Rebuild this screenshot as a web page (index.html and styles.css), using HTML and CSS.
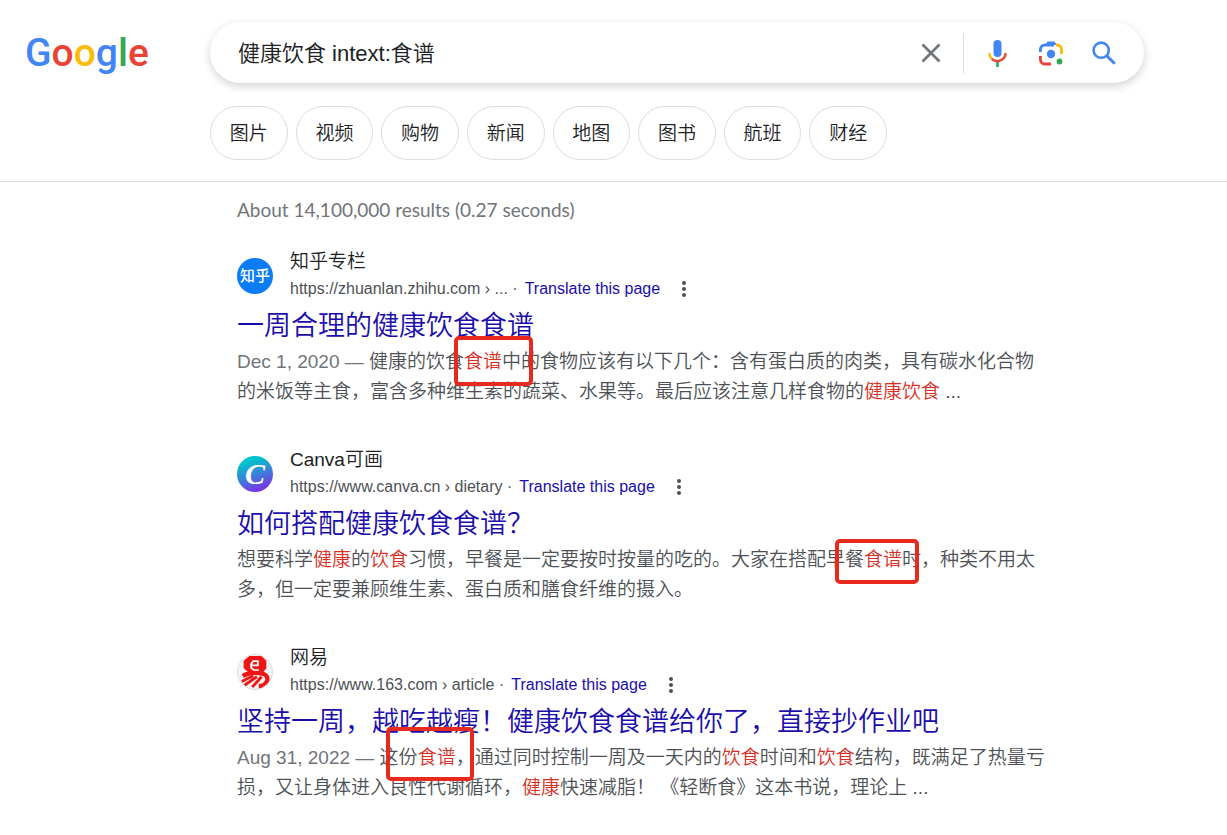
FILE: index.html
```html
<!DOCTYPE html>
<html lang="zh-CN">
<head>
  <meta charset="UTF-8">
  <title>健康饮食 intext:食谱 - Google</title>
  <link rel="stylesheet" href="styles.css">
</head>
<body>

<header class="header">
  <a class="logo" href="#" aria-label="Google"><span class="blue">G</span><span class="red">o</span><span class="yellow">o</span><span class="blue">g</span><span class="green">l</span><span class="red">e</span></a>

  <div class="search">
    <form class="search-bar" role="search">
      <input class="search-input" type="text" aria-label="Search" value="健康饮食 intext:食谱">
      <button class="icon-btn clear-btn" type="button" aria-label="Clear">
        <svg width="20" height="20" viewBox="0 0 20 20"><path d="M1.5 1.5l17 17M18.5 1.5l-17 17" fill="none" stroke="#70757a" stroke-width="2.6"/></svg>
      </button>
      <span class="divider"></span>
      <button class="icon-btn" type="button" aria-label="Search by voice">
        <svg width="20" height="28" viewBox="0 0 20 28">
          <rect x="5.500" y="1" width="8" height="17" rx="4" fill="#4285f4"/>
          <path d="M9.500 22v6" stroke="#34a853" stroke-width="2.6"/>
          <path d="M1.400 14a8.200 8.200 0 0 0 2.400 5.800" fill="none" stroke="#fbbc04" stroke-width="2.4"/>
          <path d="M3.800 19.800A8.200 8.200 0 0 0 17.600 14" fill="none" stroke="#ea4335" stroke-width="2.4"/>
        </svg>
      </button>
      <button class="icon-btn" type="button" aria-label="Search by image">
        <svg width="26" height="26" viewBox="0 0 26 26">
          <path d="M2.4 12V9.5A4.500 4.500 0 0 1 6.900 5H16" fill="none" stroke="#4285f4" stroke-width="2.8"/>
          <path d="M7.5 5l2-3.500h7L18.500 5z" fill="#4285f4"/>
          <path d="M18 5h1a4.500 4.500 0 0 1 4.500 4.500V14" fill="none" stroke="#fbbc04" stroke-width="2.8"/>
          <path d="M2.4 16v3.500A4.500 4.500 0 0 0 6.900 24H13" fill="none" stroke="#ea4335" stroke-width="2.8"/>
          <circle cx="13" cy="14" r="4.2" fill="#4285f4"/>
          <circle cx="21.5" cy="21.5" r="2.9" fill="#34a853"/>
        </svg>
      </button>
      <button class="icon-btn" type="submit" aria-label="Google Search">
        <svg width="24" height="24" viewBox="0 0 24 24">
          <circle cx="9.2" cy="9.2" r="7.6" fill="none" stroke="#4285f4" stroke-width="2.6"/>
          <path d="M14.5 14.5l8.300 8.300" stroke="#4285f4" stroke-width="3"/>
        </svg>
      </button>
    </form>

    <nav class="chips">
      <a class="chip" href="#">图片</a>
      <a class="chip" href="#">视频</a>
      <a class="chip" href="#">购物</a>
      <a class="chip" href="#">新闻</a>
      <a class="chip" href="#">地图</a>
      <a class="chip" href="#">图书</a>
      <a class="chip" href="#">航班</a>
      <a class="chip" href="#">财经</a>
    </nav>
  </div>
</header>

<main class="results">
  <p class="stats">About 14,100,000 results (0.27 seconds)</p>

  <article class="result">
    <div class="site">
      <span class="favicon favicon-zhihu">知乎</span>
      <div>
        <div class="site-name">知乎专栏</div>
        <div class="site-url">https://zhuanlan.zhihu.com › ... · <a href="#">Translate this page</a>
          <button class="more" type="button" aria-label="More"><svg width="6" height="18" viewBox="0 0 6 18" fill="#4d5156"><circle cx="3" cy="3" r="2"/><circle cx="3" cy="9" r="2"/><circle cx="3" cy="15" r="2"/></svg></button>
        </div>
      </div>
    </div>
    <h3 class="title"><a href="#">一周合理的健康饮食食谱</a></h3>
    <p class="desc"><span class="date">Dec 1, 2020 — </span>健康的饮食<em>食谱</em>中的食物应该有以下几个：含有蛋白质的肉类，具有碳水化合物的米饭等主食，富含多种维生素的蔬菜、水果等。最后应该注意几样食物的<em>健康饮食</em> ...</p>
    <span class="box box-1"></span>
  </article>

  <article class="result">
    <div class="site">
      <span class="favicon favicon-canva">C</span>
      <div>
        <div class="site-name">Canva可画</div>
        <div class="site-url">https://www.canva.cn › dietary · <a href="#">Translate this page</a>
          <button class="more" type="button" aria-label="More"><svg width="6" height="18" viewBox="0 0 6 18" fill="#4d5156"><circle cx="3" cy="3" r="2"/><circle cx="3" cy="9" r="2"/><circle cx="3" cy="15" r="2"/></svg></button>
        </div>
      </div>
    </div>
    <h3 class="title"><a href="#">如何搭配健康饮食食谱？</a></h3>
    <p class="desc">想要科学<em>健康</em>的<em>饮食</em>习惯，早餐是一定要按时按量的吃的。大家在搭配早餐<em>食谱</em>时，种类不用太多，但一定要兼顾维生素、蛋白质和膳食纤维的摄入。</p>
    <span class="box box-2"></span>
  </article>

  <article class="result">
    <div class="site">
      <span class="favicon favicon-163">
        <svg width="36" height="36" viewBox="0 0 36 36">
          <path d="M12 1h13l5 5v8l-4 5H12l-6-5V6z" fill="#f01414"/>
          <path d="M15 11h6V6.500h-5l-2 3v4l3 2.500h5" fill="none" stroke="#fff" stroke-width="2"/>
          <path d="M5 22q9-5 22-2q5 2 4 7q-2 6-9 6" fill="none" stroke="#f01414" stroke-width="4.500"/>
          <path d="M4 28l12-6M7 32l13-9M15 34l10-11" fill="none" stroke="#f01414" stroke-width="3"/>
        </svg>
      </span>
      <div>
        <div class="site-name">网易</div>
        <div class="site-url">https://www.163.com › article · <a href="#">Translate this page</a>
          <button class="more" type="button" aria-label="More"><svg width="6" height="18" viewBox="0 0 6 18" fill="#4d5156"><circle cx="3" cy="3" r="2"/><circle cx="3" cy="9" r="2"/><circle cx="3" cy="15" r="2"/></svg></button>
        </div>
      </div>
    </div>
    <h3 class="title"><a href="#">坚持一周，越吃越瘦！健康饮食食谱给你了，直接抄作业吧</a></h3>
    <p class="desc"><span class="date">Aug 31, 2022 — </span>这份<em>食谱</em>，通过同时控制一周及一天内的<em>饮食</em>时间和<em>饮食</em>结构，既满足了热量亏损，又让身体进入良性代谢循环，<em>健康</em>快速减脂！ 《轻断食》这本书说，理论上 ...</p>
    <span class="box box-3"></span>
  </article>
</main>

</body>
</html>
```
FILE: styles.css
```css
* {
  box-sizing: border-box;
}
body {
  margin: 0;
  background: #fff;
  color: #202124;
  font-family: "Liberation Sans", "Noto Sans CJK SC", sans-serif;
  font-weight: 350;
  text-spacing-trim: space-all;
}
a {
  color: #1a0dab;
  text-decoration: none;
}

/* header */
.header {
  display: flex;
  padding: 22px 83px 21px 0;
  border-bottom: 1px solid #dadce0;
}
.logo {
  width: 210px;
  padding-left: 25px;
  font: 500 39px/63px Roboto, sans-serif;
}
.blue { color: #4285f4; }
.red { color: #ea4335; }
.yellow { color: #fbbc05; }
.green { color: #34a853; }

.search {
  flex: 1;
}
.search-bar {
  display: flex;
  align-items: center;
  height: 61px;
  padding: 0 14px 0 28px;
  border-radius: 31px;
  box-shadow: 0 3px 8px rgba(60, 64, 67, 0.24);
}
.search-input {
  flex: 1;
  min-width: 0;
  height: 40px;
  padding: 0 0 4px;
  border: none;
  outline: none;
  background: none;
  color: #202124;
  font: inherit;
  font-size: 22px;
}
.icon-btn {
  display: flex;
  align-items: center;
  justify-content: center;
  width: 53px;
  height: 53px;
  padding: 0;
  border: none;
  background: none;
  cursor: pointer;
}
.clear-btn {
  width: 32px;
}
.divider {
  width: 1px;
  height: 40px;
  margin: 0 7px 0 16px;
  background: #dadce0;
}

.chips {
  display: flex;
  gap: 8px;
  max-width: 677px;
  margin-top: 23px;
}
.chip {
  flex: 1;
  padding-top: 2px;
  border: 1px solid #dadce0;
  border-radius: 27px;
  color: #202124;
  font-size: 19px;
  line-height: 50px;
  text-align: center;
}

/* results */
.results {
  max-width: 1049px;
  padding: 13px 0 0 237px;
}
.stats {
  margin: 0 0 24px;
  color: #70757a;
  font: 400 19px/30px Lato, sans-serif;
}
.result {
  position: relative;
  margin-bottom: 40px;
}
.site {
  display: flex;
  align-items: center;
  gap: 17px;
}
.site-name {
  font-size: 19px;
  line-height: 26px;
}
.site-url {
  display: flex;
  align-items: center;
  color: #4d5156;
  font-size: 16px;
  line-height: 28px;
}
.site-url a {
  margin-left: 7px;
}
.more {
  display: flex;
  margin-left: 21px;
  padding: 0;
  border: none;
  background: none;
  cursor: pointer;
}
.favicon {
  width: 36px;
  height: 36px;
  border-radius: 50%;
  overflow: hidden;
  color: #fff;
  line-height: 36px;
  text-align: center;
}
.favicon-zhihu {
  background: #0a7cf5;
  font-size: 15px;
  font-weight: 500;
}
.favicon-canva {
  background: linear-gradient(160deg, #00c4cc 20%, #4a6fdc 60%, #7d2ae8 90%);
  font-family: "Liberation Serif", serif;
  font-size: 30px;
  font-style: italic;
  font-weight: 700;
}
.favicon-163 {
  border: 1px solid #dadce0;
  background: #f5f5f5;
}
.favicon-163 svg {
  display: block;
  width: 100%;
  height: 100%;
}
.title {
  margin: 2px 0 0;
  font-size: 27px;
  font-weight: 350;
  line-height: 42px;
}
.desc {
  margin: 0;
  color: #4d5156;
  font-size: 19px;
  line-height: 30px;
}
.date {
  color: #70757a;
}
.desc em {
  color: #d93025;
  font-style: normal;
}

/* red marker frames over the keyword */
.box {
  position: absolute;
  border: 4px solid #e8291e;
  border-radius: 5px;
}
.box-1 {
  left: 217px;
  top: 87px;
  width: 79px;
  height: 50px;
}
.box-2 {
  left: 598px;
  top: 92px;
  width: 84px;
  height: 45px;
}
.box-3 {
  left: 149px;
  top: 82px;
  width: 88px;
  height: 54px;
}
```
